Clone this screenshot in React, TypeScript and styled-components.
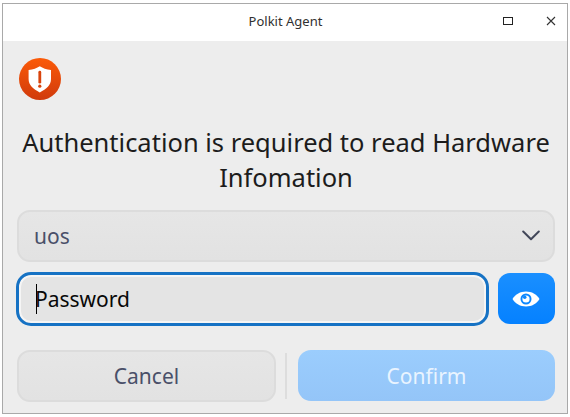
import React from "react";
import styled, { createGlobalStyle } from "styled-components";

const GlobalStyle = createGlobalStyle`
  * { box-sizing: border-box; }
  body { margin: 0; background: #fff; font-family: "Noto Sans", sans-serif; overflow: hidden; }
  button { font-family: inherit; padding: 0; margin: 0; }
`;

const Desktop = styled.div`
  width: 570px;
  height: 417px;
  padding: 3px 2px;
  background: #fff;
`;

const Window = styled.div`
  display: flex;
  flex-direction: column;
  width: 566px;
  height: 411px;
  border: 1px solid #a9a9a9;
  background: #ededed;
`;

const TitleBar = styled.header`
  display: grid;
  grid-template-columns: 86px 1fr 86px;
  align-items: center;
  height: 37px;
  flex: none;
  background: #fff;
`;

const Title = styled.h1`
  grid-column: 2;
  margin: 0;
  padding: 0 0 3px 1px;
  font-size: 13px;
  font-weight: 400;
  line-height: 18px;
  text-align: center;
  color: #303030;
`;

const WindowControls = styled.div`
  display: flex;
  justify-content: flex-end;
  gap: 21px;
  padding: 0 5px 3px 0;
`;

const ControlButton = styled.button`
  display: flex;
  align-items: center;
  justify-content: center;
  width: 22px;
  height: 22px;
  border: 0;
  background: transparent;
`;

const Content = styled.main`
  display: flex;
  flex-direction: column;
  flex: 1;
  padding: 17px 12px 11px 13px;
`;

const WarningIcon = styled.svg`
  display: block;
  width: 42px;
  height: 42px;
  margin-left: 3px;
  flex: none;
`;

const Message = styled.p`
  margin: 25px 0 0 1px;
  font-size: 25.5px;
  line-height: 35px;
  text-align: center;
  white-space: nowrap;
  color: #1c1c1c;
`;

const UserSelect = styled.button`
  display: flex;
  align-items: center;
  justify-content: space-between;
  height: 52px;
  margin: 15px 0 0 1px;
  padding: 0 13px 1px 15px;
  border: 2px solid #dcdcdc;
  border-radius: 13px;
  background: linear-gradient(#e6e6e6, #e2e2e2);
  font-size: 21px;
  color: #4a5069;
  flex: none;
`;

const PasswordRow = styled.div`
  display: flex;
  align-items: center;
  gap: 9px;
  margin-top: 10px;
`;

const PasswordField = styled.div`
  display: flex;
  align-items: center;
  flex: 1;
  height: 54px;
  padding-left: 17px;
  border: 3px solid #1672c4;
  border-radius: 15px;
  background: #e4e4e4;
  box-shadow: inset 0 0 0 2px #f5f5f5;
  font-size: 21px;
  color: #080808;
`;

const Caret = styled.span`
  width: 1px;
  height: 30px;
  margin-right: -2px;
  background: #000;
`;

const RevealButton = styled.button`
  display: flex;
  align-items: center;
  justify-content: center;
  width: 57.5px;
  height: 51px;
  margin-bottom: 1px;
  border: 0;
  border-radius: 12px;
  background: linear-gradient(#1a8fff, #0581ff);
`;

const Actions = styled.footer`
  display: flex;
  align-items: flex-start;
  margin: 24px 0 0 1px;
`;

const ActionButton = styled.button<{ $primary?: boolean }>`
  width: ${({ $primary }) => ($primary ? 257 : 259)}px;
  height: ${({ $primary }) => ($primary ? 51 : 52)}px;
  padding-bottom: ${({ $primary }) => ($primary ? 0 : 1)}px;
  border: ${({ $primary }) => ($primary ? "0" : "2px solid #dcdcdc")};
  border-radius: 13px;
  background: ${({ $primary }) =>
    $primary ? "linear-gradient(#9bcdfd, #94c5f8)" : "linear-gradient(#e6e6e6, #e2e2e2)"};
  font-size: 21px;
  color: ${({ $primary }) => ($primary ? "#e9f4ff" : "#4a5069")};
`;

const Separator = styled.span`
  width: 2px;
  height: 46px;
  margin: 3px 11px 0 9px;
  background: #dddddd;
`;

export default function App() {
  return (
    <>
      <GlobalStyle />
      <Desktop>
        <Window>
          <TitleBar>
            <Title>Polkit Agent</Title>
            <WindowControls>
              <ControlButton aria-label="Maximize">
                <svg width="10" height="8" viewBox="0 0 10 8">
                  <rect x=".5" y=".5" width="9" height="7" fill="none" stroke="#222" />
                </svg>
              </ControlButton>
              <ControlButton aria-label="Close">
                <svg width="10" height="10" viewBox="0 0 10 10">
                  <path d="M1 1l8 8M9 1L1 9" stroke="#333" strokeWidth="1.1" />
                </svg>
              </ControlButton>
            </WindowControls>
          </TitleBar>
          <Content>
            <WarningIcon viewBox="0 0 42 42">
              <defs>
                <linearGradient id="warning" x1="0" y1="0" x2="0" y2="1">
                  <stop offset="0" stopColor="#fb5a08" />
                  <stop offset="1" stopColor="#d03a0c" />
                </linearGradient>
              </defs>
              <circle cx="21" cy="21" r="21" fill="url(#warning)" />
              <path
                d="M20.800 8.200c3 1.900 6.600 3.200 11.200 3.900v9c0 6-4.500 10.300-11.200 13.300-6.700-3-11.200-7.300-11.200-13.300v-9c4.600-.7 8.200-2 11.200-3.900z"
                fill="#fff"
              />
              <path d="M20.800 14.200v10" stroke="#d9440c" strokeWidth="2.800" strokeLinecap="round" />
              <circle cx="20.800" cy="28.200" r="1.600" fill="#d9440c" />
            </WarningIcon>
            <Message>
              Authentication is required to read Hardware
              <br />
              Infomation
            </Message>
            <UserSelect>
              uos
              <svg width="18" height="12" viewBox="0 0 18 12">
                <path
                  d="M1.200 1.500L9 9.200l7.800-7.700"
                  fill="none"
                  stroke="#414658"
                  strokeWidth="2"
                  strokeLinecap="round"
                  strokeLinejoin="round"
                />
              </svg>
            </UserSelect>
            <PasswordRow>
              <PasswordField>
                <Caret />
                Password
              </PasswordField>
              <RevealButton aria-label="Show password">
                <svg width="28" height="18" viewBox="0 0 28 18">
                  <path
                    d="M.5 9C3.500 4.200 8.300 1.500 14 1.500S24.500 4.200 27.500 9C24.500 13.800 19.700 16.500 14 16.500S3.500 13.800 .5 9z"
                    fill="#fff"
                  />
                  <circle cx="14" cy="9" r="5.500" fill="#0c87ff" />
                  <circle cx="14" cy="9" r="3.600" fill="#fff" />
                  <circle cx="12.700" cy="7.300" r="1.800" fill="#0c87ff" />
                </svg>
              </RevealButton>
            </PasswordRow>
            <Actions>
              <ActionButton>Cancel</ActionButton>
              <Separator />
              <ActionButton $primary>Confirm</ActionButton>
            </Actions>
          </Content>
        </Window>
      </Desktop>
    </>
  );
}
